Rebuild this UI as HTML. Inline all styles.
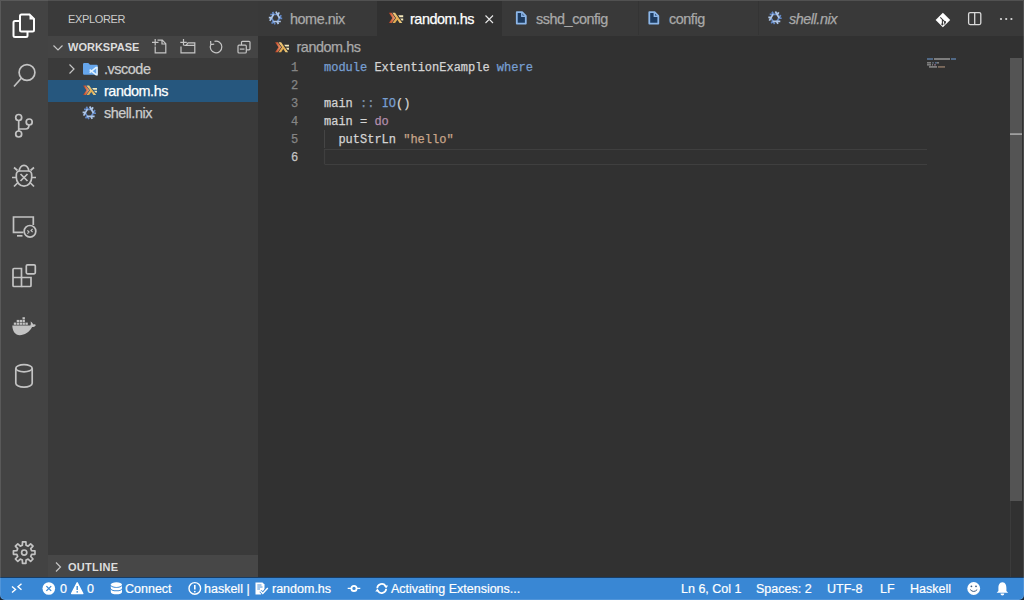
<!DOCTYPE html>
<html><head><meta charset="utf-8">
<style>
*{box-sizing:border-box;margin:0;padding:0}
html,body{width:1024px;height:600px;overflow:hidden;background:#313131;font-family:"Liberation Sans",sans-serif}
.a{position:absolute}
#act{left:0;top:0;width:48px;height:577px;background:#434343}
#side{left:48px;top:0;width:210px;height:577px;background:#3a3a3a}
#tabs{left:258px;top:0;width:766px;height:36px;background:#393939}
#bread{left:258px;top:36px;width:766px;height:22px;background:#313131}
#status{left:0;top:577px;width:1024px;height:23px;background:#3987d4;border-top:1px solid #173d66}
#frame{left:0;top:0;width:1024px;height:600px;border:1px solid rgba(255,255,255,0.12);border-radius:0 0 5px 5px;box-shadow:0 0 0 6px #1d2733;pointer-events:none}
.t{position:absolute;white-space:pre;line-height:1}
.ui{font-size:14.4px;letter-spacing:-0.45px;color:#a9a9a9;-webkit-text-stroke:0.25px currentColor}
.code{font-family:"Liberation Mono",monospace;font-size:12px;color:#d4d4d4;-webkit-text-stroke:0.25px currentColor}
svg{position:absolute;overflow:visible}
.st{font-size:12.5px;color:#fff;-webkit-text-stroke:0.2px currentColor}
</style></head><body>
<div id="act" class="a"></div>
<div id="side" class="a"></div>
<div id="tabs" class="a"></div>
<div id="bread" class="a"></div>
<div id="status" class="a"></div>

<!-- sidebar -->
<div class="t" style="left:68px;top:14px;font-size:11px;letter-spacing:-0.35px;color:#cccccc">EXPLORER</div>
<div class="a" style="left:48px;top:36px;width:210px;height:22px;background:#444444"></div>
<div class="t" style="left:68px;top:42px;font-size:11px;font-weight:700;color:#dddddd">WORKSPASE</div>
<div class="a" style="left:48px;top:80px;width:210px;height:22px;background:#26577e"></div>
<div class="t ui" style="left:104px;top:62.4px;color:#cccccc">.vscode</div>
<div class="t ui" style="left:104px;top:84.4px;color:#ffffff">random.hs</div>
<div class="t ui" style="left:104px;top:106.4px;color:#cccccc">shell.nix</div>
<div class="a" style="left:48px;top:555px;width:210px;height:22px;background:#474747"></div>
<div class="t" style="left:68px;top:562px;font-size:11px;letter-spacing:0.3px;font-weight:700;color:#dddddd">OUTLINE</div>

<!-- tabs -->
<div class="a" style="left:377px;top:1px;width:125px;height:35px;background:#313131"></div>
<div class="t ui" style="left:290px;top:12.4px">home.nix</div>
<div class="t ui" style="left:410px;top:12.4px;color:#ffffff">random.hs</div>
<div class="t ui" style="left:536px;top:12.4px">sshd_config</div>
<div class="t ui" style="left:669px;top:12.4px">config</div>
<div class="t ui" style="left:789px;top:12.4px;font-style:italic">shell.nix</div>
<div class="t ui" style="left:296.5px;top:40.4px">random.hs</div>

<!-- code -->
<div class="t code" style="left:291px;top:62px;color:#858585">1</div>
<div class="t code" style="left:291px;top:80px;color:#858585">2</div>
<div class="t code" style="left:291px;top:98px;color:#858585">3</div>
<div class="t code" style="left:291px;top:116px;color:#858585">4</div>
<div class="t code" style="left:291px;top:134px;color:#858585">5</div>
<div class="t code" style="left:291px;top:152px;color:#c6c6c6">6</div>
<div class="t code" style="left:324px;top:62px"><span style="color:#779fd2">module</span> ExtentionExample <span style="color:#779fd2">where</span></div>
<div class="t code" style="left:324px;top:98px">main <span style="color:#7d8fa8">::</span> <span style="color:#779fd2">IO</span>()</div>
<div class="t code" style="left:324px;top:116px">main = <span style="color:#b48ead">do</span></div>
<div class="t code" style="left:324px;top:134px">  putStrLn <span style="color:#c8a58a">"hello"</span></div>

<!-- status -->
<div class="t st" style="left:60px;top:583px">0</div>
<div class="t st" style="left:87px;top:583px">0</div>
<div class="t st" style="left:125px;top:583px">Connect</div>
<div class="t st" style="left:204px;top:583px">haskell |</div>
<div class="t st" style="left:272px;top:583px">random.hs</div>
<div class="t st" style="left:391px;top:583px">Activating Extensions...</div>
<div class="t st" style="left:681px;top:583px">Ln 6, Col 1</div>
<div class="t st" style="left:756px;top:583px">Spaces: 2</div>
<div class="t st" style="left:827px;top:583px">UTF-8</div>
<div class="t st" style="left:880px;top:583px">LF</div>
<div class="t st" style="left:910px;top:583px">Haskell</div>


<svg class="a" style="left:0;top:0" width="1024" height="600" viewBox="0 0 1024 600">
<defs>
 <g id="nix"><path d="M-0.38 6.34L-4.18 -0.24M-2.28 3.05L-3.73 5.56M-5.30 -3.50L2.30 -3.50M-1.50 -3.50L-2.95 -6.01M5.68 -2.84L1.88 3.74M3.78 0.45L6.68 0.45" stroke="#6288c6" stroke-width="1.7" fill="none"/><path d="M5.30 3.50L-2.30 3.50M1.50 3.50L2.95 6.01M-5.68 2.84L-1.88 -3.74M-3.78 -0.45L-6.68 -0.45M0.38 -6.34L4.18 0.24M2.28 -3.05L3.73 -5.56" stroke="#aec6e8" stroke-width="1.7" fill="none"/></g>
 <linearGradient id="hg1" x1="0" x2="1" y1="0" y2="0"><stop offset="0" stop-color="#a8361f"/><stop offset="0.45" stop-color="#d86a44"/><stop offset="1" stop-color="#eba478"/></linearGradient>
 <linearGradient id="hg2" x1="0" x2="1" y1="0" y2="1"><stop offset="0" stop-color="#f1d48a"/><stop offset="0.6" stop-color="#e2aa4e"/><stop offset="1" stop-color="#f0d890"/></linearGradient>
 <g id="hs">
  <path d="M0 0L3.6 5.1L0 10.2H2.8L6.4 5.1L2.8 0Z" fill="url(#hg1)"/>
  <path d="M3.6 0L10.8 10.2H8.1L5.85 7L3.6 10.2H0.9L4.5 5.1L0.9 0Z" fill="url(#hg2)" transform="translate(2.7 0)"/>
  <path d="M9.4 2.5H14.4V4.5H10.8ZM11.4 5.6H14.4V7.6H12.8Z" fill="#f4e8ba"/>
 </g>
 <g id="file">
  <path d="M1 1H6.3L10 4.7V12.4H1Z" fill="#1d3b60" stroke="#8cb6e8" stroke-width="1.8" stroke-linejoin="round"/>
  <path d="M6 1.2V5H9.8" fill="none" stroke="#8cb6e8" stroke-width="1.4"/>
 </g>
</defs>
<!-- activity bar icons -->
<g fill="none" stroke="#ffffff" stroke-width="2">
 <path d="M19.5 21H15a1.5 1.5 0 0 0-1.5 1.5V35.5A1.5 1.5 0 0 0 15 37H26a1.5 1.5 0 0 0 1.5-1.5V32"/>
 <path d="M21.5 14.5H29.5L34 19V30A1.5 1.5 0 0 1 32.5 31.5H21.5A1.5 1.5 0 0 1 20 30V16A1.5 1.5 0 0 1 21.5 14.5Z"/>
</g>
<path d="M29.5 15.5V19.5H33.5Z" fill="#ffffff"/>
<g fill="none" stroke="#c3c3c3" stroke-width="1.7">
 <circle cx="27" cy="72.5" r="7.9"/>
 <path d="M21.3 78.3L14 86.5"/>
 <circle cx="18.7" cy="117.5" r="3"/>
 <circle cx="18.7" cy="134" r="3"/>
 <circle cx="29.2" cy="122" r="3"/>
 <path d="M18.7 120.5V131M18.7 129H25.5Q29 129 29 125"/>
 <!-- bug -->
 <path d="M19.3 171A4.7 5.6 0 0 1 28.7 171"/>
 <path d="M16.3 175Q16.3 171 20 171H28Q31.7 171 31.7 175V177.5A7.7 8.6 0 0 1 16.3 177.5Z"/>
 <path d="M14 167.5L17.5 170.5M34 167.5L30.5 170.5M12 177.5H16M32 177.5H36M14 186.5L18 182.5M34 186.5L30 182.5M20.5 174L27.5 181M27.5 174L20.5 181"/>
 <!-- remote -->
 <path d="M23.5 232.3H13.5V217H33.3V225"/>
 <path d="M17 235.8H22.5"/>
 <circle cx="30" cy="231.3" r="5.8"/>
 <path d="M27.4 230.4L29 232L27.4 233.6M32.6 228.9L31 230.5L32.6 232.1" stroke-width="1.2"/>
 <!-- extensions -->
 <path d="M13 269.5a1 1 0 0 1 1-1H21.5V286.5H14a1 1 0 0 1-1-1Z"/>
 <path d="M13 277.5H31a0 0 0 0 1 0 0V285.5a1 1 0 0 1-1 1H21.5"/>
 <rect x="26.3" y="264.8" width="9" height="9" rx="1.2"/>
 <!-- database -->
 <ellipse cx="24" cy="368.2" rx="8.2" ry="3.6"/>
 <path d="M15.8 368.2V383.3A8.2 3.8 0 0 0 32.2 383.3V368.2"/>
 <!-- gear -->
 <circle cx="24.2" cy="552.6" r="2.6"/>
</g>

<path d="M22.36 545.23L22.49 541.83L25.91 541.83L26.04 545.23L28.11 546.09L30.61 543.78L33.02 546.19L30.71 548.69L31.57 550.76L34.97 550.89L34.97 554.31L31.57 554.44L30.71 556.51L33.02 559.01L30.61 561.42L28.11 559.11L26.04 559.97L25.91 563.37L22.49 563.37L22.36 559.97L20.29 559.11L17.79 561.42L15.38 559.01L17.69 556.51L16.83 554.44L13.43 554.31L13.43 550.89L16.83 550.76L17.69 548.69L15.38 546.19L17.79 543.78L20.29 546.09Z" fill="none" stroke="#c3c3c3" stroke-width="1.7" stroke-linejoin="round"/>
<!-- docker -->
<g fill="#c3c3c3">
 <path d="M12.3 325.5H30.3C31.2 324.3 30.9 322.5 30.4 321.6C31.8 322.2 32.8 323.4 33.1 324.6C34 324.2 35.2 324.3 35.9 324.9C35.1 326.5 33.6 327.1 32.1 327.1C29.2 332.5 24.6 335.2 19.8 335.2C15.2 335.2 12.4 331 12.3 325.5Z"/>
 <rect x="13.8" y="322.6" width="2.4" height="2.2"/><rect x="16.7" y="322.6" width="2.4" height="2.2"/><rect x="19.6" y="322.6" width="2.4" height="2.2"/><rect x="22.5" y="322.6" width="2.4" height="2.2"/><rect x="25.4" y="322.6" width="2.4" height="2.2"/>
 <rect x="16.7" y="319.9" width="2.4" height="2.2"/><rect x="19.6" y="319.9" width="2.4" height="2.2"/><rect x="22.5" y="319.9" width="2.4" height="2.2"/>
 <rect x="22.5" y="317.2" width="2.4" height="2.2"/>
</g>
<!-- sidebar -->
<g fill="none" stroke="#c5c5c5" stroke-width="1.2">
 <path d="M53.5 45.5L58 50L62.5 45.5"/>
 <path d="M69.5 64.5L74 69L69.5 73.5"/>
 <path d="M56 562.5L60.5 567L56 571.5"/>
 <path d="M152 42.3H158.5M155.2 39V45.5"/>
 <path d="M157.5 40.2H162.3L165.8 43.7V52.8H155.2V46.5M162 40.5V44H165.5"/>
 <path d="M180.3 42.3H186.8M183.5 39V45.5"/>
 <path d="M181 46.5V52.8H194.8V42.8H188L186 45.4H184.2M186 45.4H194.8"/>
 <path d="M210.8 44.5A5.8 5.8 0 1 0 214.5 41.4M210.6 41L210.8 44.6L214.2 44.2"/>
 <path d="M241.5 45V42.3A1 1 0 0 1 242.5 41.3H249A1 1 0 0 1 250 42.3V48.8A1 1 0 0 1 249 49.8H246.3"/>
 <rect x="238" y="45.2" width="8.3" height="7.8" rx="1"/>
 <path d="M239.8 49.1H244.5"/>
</g>
<!-- vscode folder -->
<path d="M83 64.2a1.2 1.2 0 0 1 1.2-1.2H88.3L90 64.8H96.6a1.2 1.2 0 0 1 1.2 1.2V73.6a1.2 1.2 0 0 1-1.2 1.2H84.2a1.2 1.2 0 0 1-1.2-1.2Z" fill="#66a6ec"/>
<path d="M96.6 67.2L89.6 72.6M96.6 75.2L89.6 69.6M97 66.8V75.6" fill="none" stroke="#e2f3ff" stroke-width="1.5"/>
<use href="#hs" transform="translate(83 85.6) scale(0.97 0.92)"/>
<use href="#nix" transform="translate(89.3 112.8)"/>
<!-- tabs -->
<use href="#nix" transform="translate(275.5 18)"/>
<use href="#hs" transform="translate(388.8 12.8)"/>
<path d="M485.5 15.5L493 23M493 15.5L485.5 23" stroke="#e8e8e8" stroke-width="1.1" fill="none"/>
<use href="#file" transform="translate(515.8 11.2)"/>
<use href="#file" transform="translate(648.3 11.2)"/>
<use href="#nix" transform="translate(775 17.8)"/>
<use href="#hs" transform="translate(275 42.2) scale(0.97 0.98)"/>
<path d="M942.9 12.7L950.2 20L942.9 27.3L935.6 20Z" fill="#ffffff"/>
<path d="M940.3 17.4L944.8 21.9M942.4 19.5V24.5M944.8 21.9V24.5" stroke="#3a3a3a" stroke-width="1.1" fill="none"/>
<circle cx="942.4" cy="24.3" r="1.1" fill="#3a3a3a"/><circle cx="945" cy="22" r="1.1" fill="#3a3a3a"/>
<rect x="968.6" y="12.6" width="12.2" height="12" rx="1.5" fill="none" stroke="#dadada" stroke-width="1.3"/>
<path d="M974.7 12.6V24.6" stroke="#dadada" stroke-width="1.3"/>
<circle cx="1001" cy="19" r="1.1" fill="#dadada"/><circle cx="1006.2" cy="19" r="1.1" fill="#dadada"/><circle cx="1011.4" cy="19" r="1.1" fill="#dadada"/>
<!-- editor -->
<path d="M638.5 1V35M758.5 1V35" stroke="#343434" stroke-width="1"/>
<path d="M324.5 130V148" stroke="#454545" stroke-width="1"/>
<path d="M324.5 164V149.5H927M324.5 164.5H927" fill="none" stroke="#3f3f3f" stroke-width="1.2"/>
<!-- status icons -->
<g fill="none" stroke="#ffffff" stroke-width="1.4">
 <path d="M12 586.5L15.5 589.5L12 592.5M21.5 583.8L18 586.8L21.5 589.8"/>
 <path d="M71.6 593.6L77.2 582.8L82.8 593.6Z" fill="#ffffff" stroke-linejoin="round"/>
 <circle cx="194.8" cy="588.4" r="5.8"/>
 <path d="M347.7 588.4H351.2M356.8 588.4H360.3"/>
 <circle cx="354" cy="588.4" r="2.6" stroke-width="1.8"/>
 <path d="M377.2 588.3A4.6 4.6 0 0 1 385.6 586M386.2 588.9A4.6 4.6 0 0 1 377.8 591" stroke-width="1.7"/>
</g>
<circle cx="48.8" cy="588.5" r="6.3" fill="#ffffff"/>
<path d="M46.4 586.1L51.2 590.9M51.2 586.1L46.4 590.9" stroke="#3987d4" stroke-width="1.3"/>
<path d="M77.2 586V590" stroke="#3987d4" stroke-width="1.4"/><circle cx="77.2" cy="591.9" r="0.8" fill="#3987d4"/>
<path d="M194.8 585V589.5" stroke="#ffffff" stroke-width="1.6"/><circle cx="194.8" cy="591.6" r="0.9" fill="#ffffff"/>
<g fill="#ffffff">
 <ellipse cx="116.4" cy="584.6" rx="5.6" ry="2.3"/>
 <path d="M110.8 585.5A5.6 2.3 0 0 0 122 585.5V588A5.6 2.3 0 0 1 110.8 588Z"/>
 <path d="M110.8 589A5.6 2.3 0 0 0 122 589V592A5.6 2.3 0 0 1 110.8 592Z"/>
 <path d="M383.9 585.4H388.1L386.1 588.6Z"/>
 <path d="M375.3 591.6H379.5L377.4 588.4Z"/>
 <circle cx="973.7" cy="588.5" r="6.4"/>
 <path d="M1002.4 582.3C999.2 582.3 998.4 585.5 998.4 588V591L996.6 592.8H1008.2L1006.4 591V588C1006.4 585.5 1005.6 582.3 1002.4 582.3Z"/>
 <path d="M1000.5 593.5H1004.3A1.9 1.9 0 0 1 1000.5 593.5Z"/>
 <path d="M255.5 582.5H262.5L264.5 584.5V589L261 594.5H255.5Z"/>
</g>
<path d="M257.3 585H261.5M257.3 587H262.5M257.3 589H260" stroke="#3987d4" stroke-width="0.9"/>
<path d="M260.5 591L262.8 593.4L267.8 588" stroke="#3987d4" stroke-width="3" fill="none"/>
<path d="M260.5 591L262.8 593.4L267.8 588" stroke="#ffffff" stroke-width="1.5" fill="none"/>
<circle cx="971.4" cy="586.3" r="0.9" fill="#3a5a80"/><circle cx="976" cy="586.3" r="0.9" fill="#3a5a80"/>
<path d="M970.2 589.6Q973.7 593.3 977.2 589.6" stroke="#3a5a80" stroke-width="1" fill="none"/>
<!-- minimap -->
<g opacity="0.5">
<rect x="927" y="58" width="6" height="2" fill="#6f9fd8"/>
<rect x="934" y="58" width="16" height="2" fill="#c8c8c8"/>
<rect x="951" y="58" width="5" height="2" fill="#6f9fd8"/>
<rect x="927" y="62" width="4" height="1.6" fill="#c8c8c8"/>
<rect x="932" y="62" width="2" height="1.6" fill="#7d8fa8"/>
<rect x="935" y="62" width="2" height="1.6" fill="#6f9fd8"/>
<rect x="937" y="62" width="2" height="1.6" fill="#c8c8c8"/>
<rect x="927" y="64" width="4" height="1.6" fill="#c8c8c8"/>
<rect x="932" y="64" width="1" height="1.6" fill="#c8c8c8"/>
<rect x="934" y="64" width="2" height="1.6" fill="#b48ead"/>
<rect x="929" y="66" width="8" height="1.8" fill="#c8c8c8"/>
<rect x="938" y="66" width="7" height="1.8" fill="#c8a58a"/>
</g>
<!-- scrollbar -->
<rect x="1010" y="58" width="12" height="443" fill="#545454"/>
<rect x="1010" y="133.3" width="12" height="1.6" fill="#a8a8a8"/>
<rect x="1010" y="501" width="1" height="76" fill="#3b3b3b"/>
</svg>
<div id="frame" class="a"></div>
</body></html>
